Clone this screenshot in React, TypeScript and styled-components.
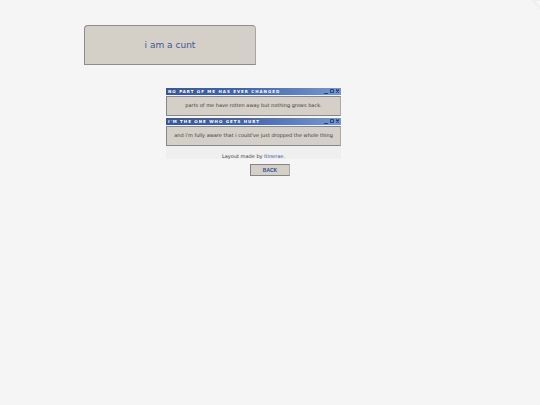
import React from "react";
import styled, { createGlobalStyle } from "styled-components";

const GlobalStyle = createGlobalStyle`
  * { box-sizing: border-box; }
  body {
    margin: 0;
    background: #f5f5f5;
    color: #4a4a4a;
    font-family: "DejaVu Sans", sans-serif;
    font-size: 5px;
  }
`;

const Page = styled.div`
  position: relative;
  display: flex;
  flex-direction: column;
  padding-top: 25px;
`;

const Corner = styled.svg`
  position: absolute;
  top: 0;
  right: 0;
  width: 9px;
  height: 9px;
`;

const Banner = styled.header`
  display: flex;
  align-items: center;
  justify-content: center;
  width: 172px;
  height: 40px;
  max-width: 100%;
  margin-left: 84px;
  background: #d4d0c8;
  border: 1px solid #8c8c8c;
  border-right-color: #a8a6a3;
  border-radius: 4px 4px 0 0;
`;

const Title = styled.h1`
  margin: 0;
  color: #3f569a;
  font-size: 9px;
  line-height: 10px;
  font-weight: 400;
`;

const Column = styled.main`
  display: flex;
  flex-direction: column;
  gap: 2px;
  width: 175px;
  max-width: 100%;
  margin: 23px 0 0 166px;
`;

const Panel = styled.section`
  display: flex;
  flex-direction: column;
`;

const TitleBar = styled.div`
  display: flex;
  align-items: center;
  justify-content: space-between;
  height: 7px;
  padding: 0 1px 0 2px;
  background: linear-gradient(90deg, #395795 0%, #4565ab 45%, #7698d0 100%);
`;

const Heading = styled.h2`
  margin: 0;
  color: #ffffff;
  font-size: 4px;
  line-height: 7px;
  font-weight: 700;
  letter-spacing: 1px;
  white-space: nowrap;
  text-transform: uppercase;
`;

const Controls = styled.svg`
  width: 16px;
  height: 7px;
`;

const Body = styled.p`
  margin: 1px 0 0;
  padding: 5px 2px 7px;
  line-height: 6px;
  text-align: center;
  color: #3c3a38;
  background: #d4d0c8;
  border: 1px solid #85888a;
  border-right-color: #a9a9a6;
`;

const Credit = styled.footer`
  width: 175px;
  max-width: 100%;
  margin-left: 166px;
  padding-top: 7px;
  line-height: 6px;
  text-align: center;
  color: #3c3c3c;
  background: #efefef;
`;

const CreditLink = styled.a`
  color: #3450a0;
  text-decoration: none;
`;

const BackButton = styled.button`
  align-self: center;
  width: 40px;
  height: 12px;
  margin-top: 5px;
  padding: 0;
  color: #304f90;
  background: #d4d0c8;
  border: 1px solid #858585;
  border-right-color: #aaa8a4;
  font-family: "Liberation Sans", sans-serif;
  font-size: 5px;
  line-height: 10px;
  font-weight: 700;
  text-transform: uppercase;
`;

const panels = [
  { title: "No part of me has ever changed", text: "parts of me have rotten away but nothing grows back." },
  { title: "I'm the one who gets hurt", text: "and i'm fully aware that i could've just dropped the whole thing" },
];

function WindowControls() {
  return (
    <Controls viewBox="0 0 16 7" aria-hidden="true" fill="none" stroke="#243a68">
      <path d="M0 5.5h4" strokeWidth="0.9" />
      <path d="M6.5 1.5h3v3h-3z" strokeWidth="0.9" />
      <path d="M12 1.5l3 3M15 1.5l-3 3" strokeWidth="1.1" />
    </Controls>
  );
}

export default function App() {
  return (
    <Page>
      <GlobalStyle />
      <Corner viewBox="0 0 9 9" aria-hidden="true">
        <path d="M0 0H9V9Z" fill="#eeeeee" />
        <path d="M4 1H9V6Z" fill="#f8f8f8" />
      </Corner>
      <Banner>
        <Title>i am a cunt</Title>
      </Banner>
      <Column>
        {panels.map((panel) => (
          <Panel key={panel.title}>
            <TitleBar>
              <Heading>{panel.title}</Heading>
              <WindowControls />
            </TitleBar>
            <Body>{panel.text}</Body>
          </Panel>
        ))}
      </Column>
      <Credit>
        Layout made by <CreditLink href="#itinerae">Itinerae.</CreditLink>
      </Credit>
      <BackButton type="button">Back</BackButton>
    </Page>
  );
}
